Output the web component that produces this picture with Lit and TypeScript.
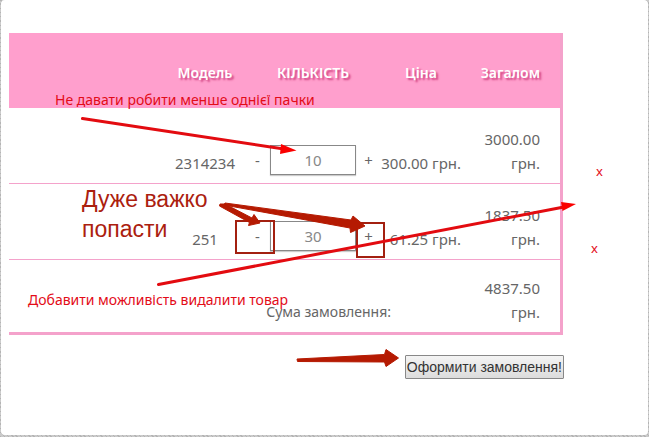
import { LitElement, html, css } from "lit";
import { customElement, state } from "lit/decorators.js";

interface Item {
  model: string;
  count: number;
  price: number;
}

@customElement("app-root")
export class AppRoot extends LitElement {
  static styles = css`
    :host {
      display: block;
      box-sizing: border-box;
      min-height: 100vh;
      padding: 0 1px 2px;
      background: repeating-linear-gradient(45deg, #b4b4b4 0 1px, #cacaca 1px 3px);
      font-family: "Noto Sans", sans-serif;
      font-size: 15px;
      line-height: 24px;
      color: #666;
    }
    .panel {
      position: relative;
      box-sizing: border-box;
      min-height: calc(100vh - 2px);
      padding: 33px 85px 24px 8px;
      border-radius: 4px;
      background: #fff;
    }
    table {
      width: 100%;
      table-layout: fixed;
      border-collapse: separate;
      border-spacing: 0;
      border: 0 solid #f4a2cb;
      border-width: 0 3px 3px 0;
    }
    .model { width: 80px; }
    .count { width: 136px; }
    .price { width: 80px; }
    .total { width: 99px; }
    th {
      height: 71px;
      padding: 4px 0 0;
      background: #ff9fcd;
      color: #fff;
      font-size: 14px;
      font-weight: 600;
      text-shadow: 2px 2px 2px #d0407f;
    }
    td {
      padding: 19px 0 8px;
      border-bottom: 1px solid #f4a2cb;
      text-align: center;
      vertical-align: bottom;
    }
    td.amount { text-align: right; white-space: nowrap; }
    td.sum, th.sum { padding-right: 20px; text-align: right; }
    td.sum { padding-left: 20px; white-space: normal; }
    .summary td { padding-top: 16px; border-bottom: 0; }
    .summary td.caption { padding-right: 70px; font-size: 14px; text-align: right; }
    .stepper {
      display: flex;
      align-items: center;
    }
    .step {
      width: 25px;
      height: 30px;
      padding: 0;
      border: 0;
      background: none;
      color: inherit;
      font: inherit;
    }
    .quantity {
      box-sizing: border-box;
      width: 86px;
      height: 30px;
      padding: 0;
      border: 1px solid #888;
      border-radius: 0;
      background: #fff;
      box-shadow: 0 1px 1px #ccc;
      color: #888;
      font: inherit;
      text-align: center;
    }
    .actions {
      display: flex;
      justify-content: flex-end;
      padding-top: 20px;
    }
    .checkout {
      height: 24px;
      margin-right: -1px;
      padding: 0 1px;
      border: 1px solid #888;
      border-radius: 1px;
      background: linear-gradient(#f4f4f4, #dcdcdc);
      color: #333;
      font: 14px "Liberation Sans", sans-serif;
      white-space: nowrap;
    }
    .notes {
      position: absolute;
      top: 0;
      left: 0;
      pointer-events: none;
    }
    .note {
      position: absolute;
      color: #e30c18;
      font-size: 14px;
      line-height: 16px;
      white-space: nowrap;
    }
    .minimum { left: 54px; top: 92px; }
    .removal { left: 27px; top: 292px; }
    .first { left: 595px; top: 163px; font-size: 13px; }
    .second { left: 590px; top: 240px; font-size: 13px; }
    .important {
      left: 81px;
      top: 184px;
      color: #ab200e;
      font: 23px/30px "Liberation Sans", sans-serif;
    }
  `;

  @state() private items: Item[] = [
    { model: "2314234", count: 10, price: 300 },
    { model: "251", count: 30, price: 61.25 },
  ];

  private setCount(index: number, count: number) {
    this.items = this.items.map((item, i) =>
      i === index ? { ...item, count: Math.max(1, count || 1) } : item
    );
  }

  private renderItem(item: Item, index: number) {
    return html`
      <tr>
        <td></td>
        <td>${item.model}</td>
        <td>
          <div class="stepper">
            <button class="step" type="button" @click=${() => this.setCount(index, item.count - 1)}>-</button>
            <input
              class="quantity"
              type="text"
              aria-label="Кількість"
              .value=${String(item.count)}
              @change=${(e: Event) => this.setCount(index, Number((e.target as HTMLInputElement).value))}
            />
            <button class="step" type="button" @click=${() => this.setCount(index, item.count + 1)}>+</button>
          </div>
        </td>
        <td class="amount">${item.price.toFixed(2)} грн.</td>
        <td class="sum">${(item.count * item.price).toFixed(2)} грн.</td>
      </tr>
    `;
  }

  render() {
    const total = this.items.reduce((sum, item) => sum + item.count * item.price, 0);
    return html`
      <main class="panel">
        <table>
          <colgroup>
            <col />
            <col class="model" />
            <col class="count" />
            <col class="price" />
            <col class="total" />
          </colgroup>
          <thead>
            <tr>
              <th></th>
              <th>Модель</th>
              <th>КІЛЬКІСТЬ</th>
              <th>Ціна</th>
              <th class="sum">Загалом</th>
            </tr>
          </thead>
          <tbody>
            ${this.items.map((item, index) => this.renderItem(item, index))}
            <tr class="summary">
              <td class="caption" colspan="4">Сума замовлення:</td>
              <td class="sum">${total.toFixed(2)} грн.</td>
            </tr>
          </tbody>
        </table>
        <div class="actions">
          <button class="checkout" type="button">Оформити замовлення!</button>
        </div>

        <svg class="notes" width="648" height="435" viewBox="1 0 648 435" aria-hidden="true">
          <g fill="none" stroke="#a32010" stroke-width="2">
            <rect x="236" y="221" width="38" height="32" />
            <rect x="357" y="223" width="27" height="34" />
          </g>
          <g stroke="#e30b10" stroke-width="3" stroke-linecap="round">
            <path d="M82.500 118.500L284 149" />
            <path d="M158.500 284.500L564 207" />
          </g>
          <g fill="#fa0000">
            <path d="M281 144L296.500 150.500L280 154Z" />
            <path d="M561 202L576 204L562.500 211Z" />
          </g>
          <g fill="#b51a02" stroke="#b51a02" stroke-linejoin="round">
            <path d="M220 204L225 204L252 218L254 214.500L260 223L248.500 225.500L249.500 222.500L219.500 206Z" />
            <path d="M225 203L351 220L353 216L365 226L350.500 232.500L350 228L224 205Z" />
            <path d="M297 359L384.500 354.500L386 349.500L398.500 358L386 366.500L384.500 362L297.500 361.500Z" />
          </g>
        </svg>
        <span class="note minimum">Не давати робити менше однієї пачки</span>
        <span class="note important">Дуже важко<br />попасти</span>
        <span class="note removal">Добавити можливість видалити товар</span>
        <span class="note first">x</span>
        <span class="note second">x</span>
      </main>
    `;
  }
}
